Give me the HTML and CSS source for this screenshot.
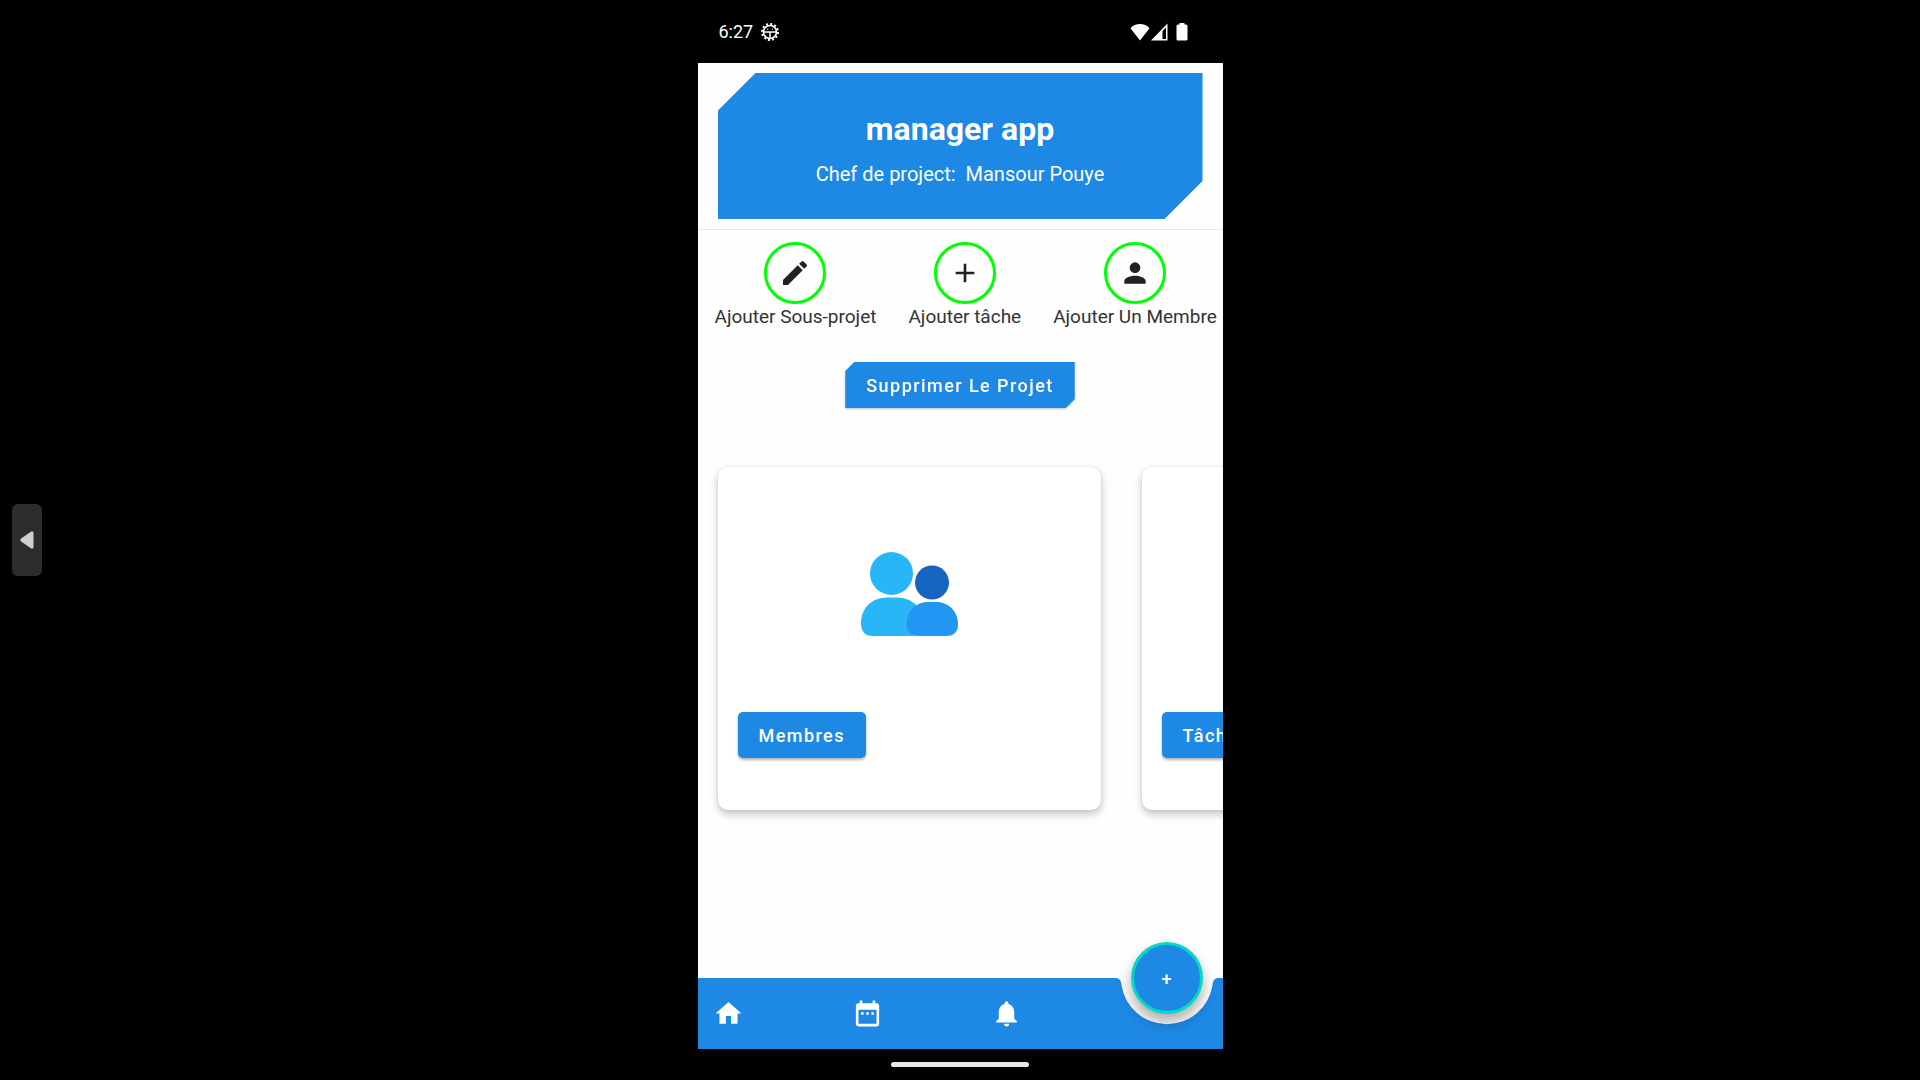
FILE: index.html
```html
<!DOCTYPE html>
<html lang="fr">
<head>
<meta charset="utf-8">
<meta name="viewport" content="width=device-width, initial-scale=1">
<title>manager app</title>
<link rel="stylesheet" href="styles.css">
</head>
<body>
<button class="handle" aria-label="Ouvrir le panneau">
  <svg width="14" height="18" viewBox="0 0 14 18"><path d="M11.500 1.500 2 8q-1 1 0 2l9.500 6.500H12.500V1.500z" fill="#d0d0d0" stroke="#d0d0d0" stroke-width="2" stroke-linejoin="round"/></svg>
</button>
<div class="phone">
  <div class="status">
    <span class="time">6:27</span>
    <svg class="gear" width="18" height="18" viewBox="0 0 18 18" fill="none" stroke="#fff">
      <circle cx="9" cy="9" r="6.500" stroke-width="1.600"/>
      <circle cx="9" cy="9" r="8" stroke-width="2" stroke-dasharray="2 2.189"/>
      <path d="M2.500 9h13M9 9v7" stroke-width="1.500"/>
      <path d="M6 6.200h1.200M10.800 6.200H12" stroke-width="1"/>
    </svg>
    <div class="signals">
      <svg width="20" height="18" viewBox="0 0 20 18"><path d="M10 17.500.5 5.200C3 2.200 6.300 1 10 1s7 1.200 9.500 4.200z" fill="#fff"/></svg>
      <svg width="17" height="18" viewBox="0 0 17 18"><path fill-rule="evenodd" d="M0 17.500 16.500.5v17zM11.500 8v8H15V4.500z" fill="#fff"/></svg>
      <svg class="battery" width="12" height="18" viewBox="0 0 12 18"><path d="M3.500 0h5v1.500H10q1.500 0 1.500 1.500V16q0 1.500-1.500 1.500H2Q.5 17.500.5 16V3Q.5 1.500 2 1.500h1.500z" fill="#fff"/></svg>
    </div>
  </div>

  <main class="screen">
    <header class="top">
      <div class="banner">
        <h1>manager app</h1>
        <p>Chef de project:&nbsp; Mansour Pouye</p>
      </div>
    </header>

    <div class="actions">
      <button class="action">
        <span class="ring"><svg width="32" height="32" viewBox="0 0 24 24"><path d="M3 17.250V21h3.750L17.810 9.940l-3.750-3.750zM20.710 7.040a1 1 0 0 0 0-1.410l-2.340-2.340a1 1 0 0 0-1.410 0l-1.830 1.830 3.750 3.750z"/></svg></span>
        <span>Ajouter Sous-projet</span>
      </button>
      <button class="action">
        <span class="ring"><svg width="32" height="32" viewBox="0 0 24 24"><path d="M19 13h-6v6h-2v-6H5v-2h6V5h2v6h6z"/></svg></span>
        <span>Ajouter tâche</span>
      </button>
      <button class="action">
        <span class="ring"><svg width="32" height="32" viewBox="0 0 24 24"><path d="M12 12a4 4 0 1 0 0-8 4 4 0 0 0 0 8zm0 2c-2.670 0-8 1.340-8 4v2h16v-2c0-2.660-5.330-4-8-4z"/></svg></span>
        <span>Ajouter Un Membre</span>
      </button>
    </div>

    <div class="delete"><button class="btn cut">Supprimer Le Projet</button></div>

    <div class="cards">
      <section class="card">
        <svg class="people" width="97" height="84" viewBox="0 0 97 84">
          <circle cx="30.500" cy="21.500" r="21.500" fill="#29b6f6"/>
          <circle cx="71" cy="30.500" r="17" fill="#1565c0"/>
          <path d="M26 45.500H36C52 45.500 62 57 62 71Q62 84 50 84H12Q0 84 0 71C0 57 10 45.500 26 45.500z" fill="#29b6f6"/>
          <path d="M67 50H75C88 50 97 60 97 72Q97 84 85 84H58Q45.500 84 45.500 72C45.500 60 54 50 67 50z" fill="#2196f3"/>
        </svg>
        <button class="btn">Membres</button>
      </section>
      <section class="card">
        <button class="btn">Tâches</button>
      </section>
    </div>
  </main>

  <nav class="nav">
    <svg class="cradle" width="113" height="71" viewBox="0 0 113 71"><path d="M0 0H6Q11 0 11.500 7A46 46 0 0 0 102.500 7Q103 0 108 0H113V71H0z" fill="#1e88e5"/></svg>
    <a href="#accueil" aria-label="Accueil"><svg width="31" height="31" viewBox="0 0 24 24"><path d="M10 20v-6h4v6h5v-8h3L12 3 2 12h3v8z"/></svg></a>
    <a href="#agenda" aria-label="Agenda"><svg width="31" height="31" viewBox="0 0 24 24"><path d="M9 11H7v2h2zm4 0h-2v2h2zm4 0h-2v2h2zm2-7h-1V2h-2v2H8V2H6v2H5a2 2 0 0 0-2 2v14c0 1.100.9 2 2 2h14a2 2 0 0 0 2-2V6a2 2 0 0 0-2-2zm0 16H5V9h14z"/></svg></a>
    <a href="#alertes" aria-label="Notifications"><svg width="31" height="31" viewBox="0 0 24 24"><path d="M12 22a2 2 0 0 0 2-2h-4c0 1.100.89 2 2 2zm6-6v-5c0-3.070-1.640-5.640-4.500-6.320V4a1.500 1.500 0 0 0-3 0v.680C7.630 5.360 6 7.920 6 11v5l-2 2v1h16v-1z"/></svg></a>
    <button class="fab" aria-label="Ajouter">+</button>
  </nav>
  <div class="gesture"><span></span></div>
</div>
</body>
</html>
```
FILE: styles.css
```css
* { box-sizing: border-box; }

body {
  margin: 0;
  background: #000;
  font-family: Roboto, "Liberation Sans", sans-serif;
  color: #333;
}

button {
  border: 0;
  padding: 0;
  background: none;
  color: inherit;
  font: inherit;
  cursor: pointer;
}

svg { display: block; }

.handle {
  position: fixed;
  left: 12px;
  top: 50%;
  transform: translateY(-50%);
  width: 30px;
  height: 72px;
  border-radius: 6px;
  background: #2d2d2d;
  padding-left: 8px;
}

.phone {
  display: flex;
  flex-direction: column;
  width: 100%;
  max-width: 525px;
  min-height: 100vh;
  margin: 0 auto;
}

/* Status bar */
.status {
  display: flex;
  align-items: center;
  gap: 8px;
  height: 63px;
  padding: 0 35px 0 21px;
  color: #fff;
  font-size: 18px;
}

.signals {
  display: flex;
  gap: 1px;
  margin-left: auto;
}

.battery { margin-left: 7px; }

/* Screen */
.screen {
  flex: 1;
  background: #fefefe;
  overflow: hidden;
}

.top {
  padding: 10px 20px;
  border-bottom: 1px solid #ebebeb;
}

.banner {
  height: 146px;
  padding-top: 36px;
  background: #1e88e5;
  clip-path: polygon(38px 0, 100% 0, 100% calc(100% - 38px), calc(100% - 38px) 100%, 0 100%, 0 38px);
  color: #fff;
  text-align: center;
}

.banner h1 {
  margin: 0 0 8px;
  font-size: 32px;
  line-height: 40px;
}

.banner p {
  margin: 0;
  font-size: 20px;
  line-height: 34px;
}

.actions {
  display: flex;
  gap: 32px;
  padding: 12px 0 0 17px;
}

.action {
  display: flex;
  flex-direction: column;
  align-items: center;
  flex: none;
  font-size: 19px;
  line-height: 26px;
}

.ring {
  display: grid;
  place-items: center;
  width: 62px;
  height: 62px;
  border: 3px solid #0f0;
  border-radius: 50%;
}

.ring svg { fill: #212121; }

.delete {
  display: flex;
  justify-content: center;
  padding: 32px 0 59px;
  filter: drop-shadow(0 1px 1px rgba(0, 0, 0, .25));
}

.btn {
  height: 46px;
  padding: 0 21px;
  border-radius: 5px;
  background: #1e88e5;
  box-shadow: 0 2px 3px rgba(0, 0, 0, .3);
  color: #fff;
  font-size: 18px;
  font-weight: 500;
  letter-spacing: .08em;
}

.cut {
  border-radius: 0;
  box-shadow: none;
  clip-path: polygon(9px 0, 100% 0, 100% calc(100% - 9px), calc(100% - 9px) 100%, 0 100%, 0 9px);
}

.cards {
  display: flex;
  gap: 41px;
  padding-left: 20px;
}

.card {
  display: flex;
  flex-direction: column;
  align-items: flex-start;
  flex: none;
  width: 383px;
  height: 343px;
  padding: 85px 20px 52px;
  border-radius: 10px;
  background: #fff;
  box-shadow: 0 4px 8px rgba(0, 0, 0, .24), 0 0 2px rgba(0, 0, 0, .1);
}

.people { align-self: center; }

.card .btn { margin-top: auto; }

/* Bottom bar */
.nav {
  position: relative;
  display: flex;
  align-items: center;
  gap: 108px;
  height: 71px;
  padding: 0 15px;
  background: linear-gradient(to right, #1e88e5 calc(100% - 112px), #fefefe 0);
}

.nav a {
  padding: 10px 0;
}

.nav a svg { fill: #fff; }

.cradle {
  position: absolute;
  right: 0;
  top: 0;
}

.fab {
  position: absolute;
  right: 20px;
  top: -36px;
  width: 72px;
  height: 72px;
  border: 3px solid #03dac5;
  border-radius: 50%;
  background: #1e88e5;
  box-shadow: 0 8px 14px rgba(0, 0, 0, .32);
  color: #fff;
  font-size: 18px;
  font-weight: 500;
}

.gesture {
  display: flex;
  justify-content: center;
  align-items: center;
  height: 31px;
}

.gesture span {
  width: 138px;
  height: 5px;
  border-radius: 3px;
  background: #e8e8e8;
}
```
